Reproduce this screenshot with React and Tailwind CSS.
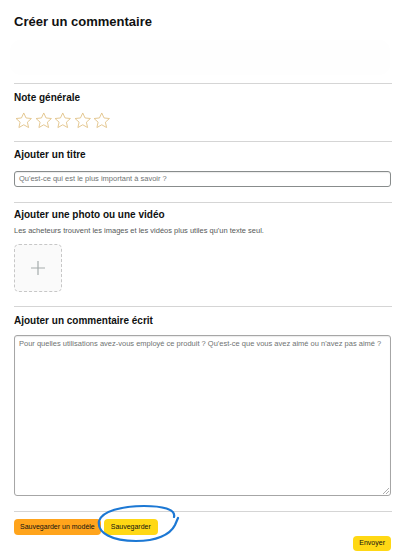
import React from "react";

function Star() {
  return (
    <svg width="19.5" height="19" viewBox="0 0 24 24" fill="none">
      <path
        d="M12 2.5l2.9 6.3 6.8.7-5.1 4.6 1.5 6.8L12 17.4l-6.1 3.5 1.5-6.8-5.1-4.6 6.8-.7z"
        stroke="#e3c58d"
        strokeWidth="1.2"
        strokeLinejoin="round"
      />
    </svg>
  );
}

export default function App() {
  return (
    <div
      className="relative w-[400px] h-[556px] bg-white overflow-hidden text-[#0f1111]"
      style={{ fontFamily: '"Liberation Sans", Arial, sans-serif' }}
    >
      <div className="px-[14px] pt-[12px]">
        <h1 className="text-[13px] leading-[20px] font-bold">Créer un commentaire</h1>
        <div className="mt-[8px] h-[35px] bg-[#fefefe] rounded-[10px] ml-[-4px] mr-[-4px]"></div>
        <div className="mt-[8px] h-px bg-[#d5d5d5] mr-[-6px]"></div>

        <div className="mt-[7px] text-[10px] leading-[14px] font-bold">Note générale</div>
        <div className="mt-[6px] flex">
          <Star />
          <Star />
          <Star />
          <Star />
          <Star />
        </div>
        <div className="mt-[11px] h-px bg-[#d5d5d5] mr-[-6px]"></div>

        <div className="mt-[6px] text-[10px] leading-[14px] font-bold">Ajouter un titre</div>
        <div className="mt-[9px] h-[16px] border border-[#888c8c] rounded-[3px] mr-[-5px] flex items-center px-[4px] text-[7.5px] text-[#6f7373] shadow-[inset_0_1px_1px_rgba(0,0,0,0.08)]">
          Qu'est-ce qui est le plus important à savoir ?
        </div>
        <div className="mt-[15px] h-px bg-[#d5d5d5] mr-[-6px]"></div>

        <div className="mt-[5px] text-[10px] leading-[14px] font-bold">Ajouter une photo ou une vidéo</div>
        <div className="mt-[3px] text-[7.5px] leading-[12px] text-[#565959]">
          Les acheteurs trouvent les images et les vidéos plus utiles qu'un texte seul.
        </div>
        <div className="mt-[7px] w-[48px] h-[48px] border border-dashed border-[#c7c7c7] rounded-[5px] bg-[#fafafa] flex items-center justify-center">
          <svg width="16" height="16" viewBox="0 0 16 16">
            <path d="M8 1v14M1 8h14" stroke="#a5acac" strokeWidth="1.2" />
          </svg>
        </div>
        <div className="mt-[14px] h-px bg-[#d5d5d5] mr-[-6px]"></div>

        <div className="mt-[7px] text-[10px] leading-[14px] font-bold">Ajouter un commentaire écrit</div>
        <div className="relative mt-[7px] h-[161px] border border-[#a6a6a6] rounded-[3px] mr-[-5px] px-[4px] pt-[3px] text-[7.5px] leading-[10px] text-[#6f7373] shadow-[inset_0_1px_1px_rgba(0,0,0,0.08)]">
          Pour quelles utilisations avez-vous employé ce produit ? Qu'est-ce que vous avez aimé ou n'avez pas aimé ?
          <svg className="absolute right-[1px] bottom-[1px]" width="7" height="7" viewBox="0 0 7 7">
            <path d="M7 1L1 7M7 4L4 7" stroke="#999" strokeWidth="0.8" />
          </svg>
        </div>
        <div className="mt-[15px] h-px bg-[#d5d5d5] mr-[-6px]"></div>

        <div className="mt-[7px] flex gap-[3px]">
          <div className="h-[16px] px-[6px] rounded-[4px] bg-[#ffa41c] flex items-center text-[7px] text-[#0f1111]">
            Sauvegarder un modèle
          </div>
          <div className="h-[16px] px-[7px] rounded-[4px] bg-[#ffd814] flex items-center text-[7px] text-[#0f1111]">
            Sauvegarder
          </div>
        </div>
        <div className="mt-[1px] flex justify-end mr-[-5px]">
          <div className="h-[15px] px-[6px] rounded-[4px] bg-[#ffd814] flex items-center text-[7px] text-[#0f1111]">
            Envoyer
          </div>
        </div>
      </div>

      <svg
        className="absolute left-[94px] top-[503px]"
        width="90"
        height="44"
        viewBox="0 0 90 44"
        fill="none"
      >
        <path
          d="M80 14 C 82 6, 68 3, 50 3 C 28 3, 8 8, 5 18 C 3 30, 18 38, 42 38 C 62 38, 76 32, 81 22 L 84 15"
          stroke="#1c78d4"
          strokeWidth="2.2"
          strokeLinecap="round"
        />
      </svg>
    </div>
  );
}
